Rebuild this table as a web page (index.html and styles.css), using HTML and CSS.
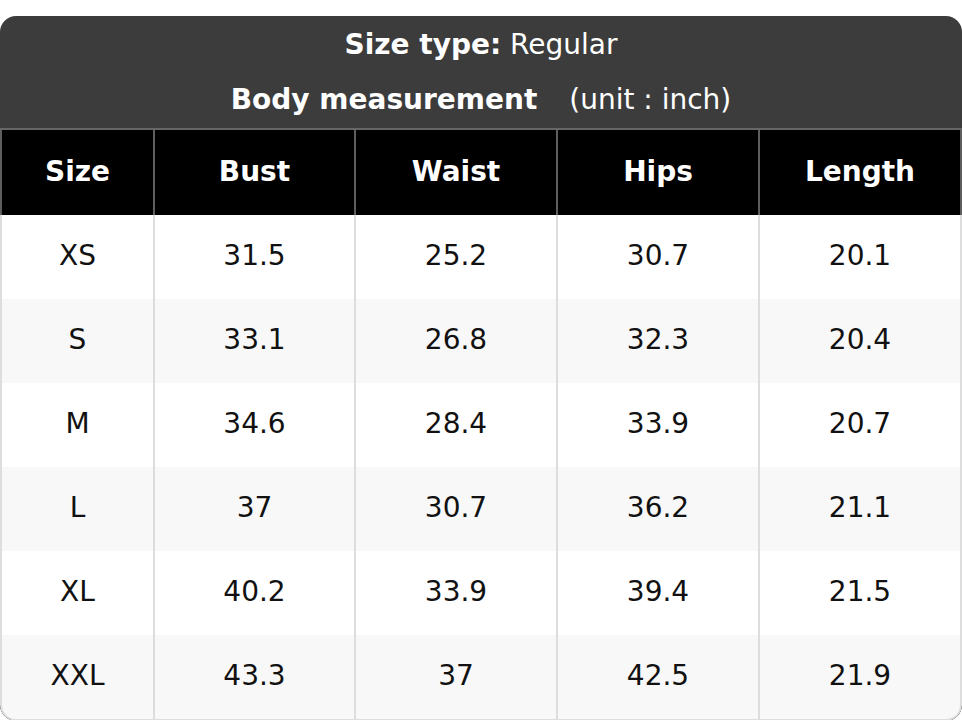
FILE: index.html
```html
<!DOCTYPE html>
<html lang="en">
<head>
<meta charset="utf-8">
<title>Size chart</title>
<link rel="stylesheet" href="styles.css">
</head>
<body>
<div class="card">
  <div class="title">
    <div class="title-line"><b>Size type:</b> Regular</div>
    <div class="title-line"><b>Body measurement</b><span class="unit">(unit : inch)</span></div>
  </div>
  <div class="head row">
    <div class="cell">Size</div>
    <div class="cell">Bust</div>
    <div class="cell">Waist</div>
    <div class="cell">Hips</div>
    <div class="cell">Length</div>
  </div>
  <div class="body">
    <div class="row data">
      <div class="cell">XS</div><div class="cell">31.5</div><div class="cell">25.2</div><div class="cell">30.7</div><div class="cell">20.1</div>
    </div>
    <div class="row data alt">
      <div class="cell">S</div><div class="cell">33.1</div><div class="cell">26.8</div><div class="cell">32.3</div><div class="cell">20.4</div>
    </div>
    <div class="row data">
      <div class="cell">M</div><div class="cell">34.6</div><div class="cell">28.4</div><div class="cell">33.9</div><div class="cell">20.7</div>
    </div>
    <div class="row data alt">
      <div class="cell">L</div><div class="cell">37</div><div class="cell">30.7</div><div class="cell">36.2</div><div class="cell">21.1</div>
    </div>
    <div class="row data">
      <div class="cell">XL</div><div class="cell">40.2</div><div class="cell">33.9</div><div class="cell">39.4</div><div class="cell">21.5</div>
    </div>
    <div class="row data alt">
      <div class="cell">XXL</div><div class="cell">43.3</div><div class="cell">37</div><div class="cell">42.5</div><div class="cell">21.9</div>
    </div>
  </div>
</div>
</body>
</html>
```

FILE: styles.css
```css
html, body {
  margin: 0;
  padding: 0;
  background: #ffffff;
}

body {
  padding-top: 16px;
  font-family: "DejaVu Sans", "Liberation Sans", sans-serif;
}

.card {
  width: 962px;
  border-radius: 16px;
  overflow: hidden;
  background: #3c3c3c;
}

.title {
  color: #ffffff;
  font-size: 28px;
  text-align: center;
  border-bottom: 2px solid #666666;
}

.title-line {
  height: 56px;
  line-height: 56px;
}

.title-line:first-child {
  padding-top: 1px;
  height: 55px;
}

.title-line b {
  font-weight: bold;
}

.unit {
  margin-left: 32px;
}

.row {
  display: grid;
  grid-template-columns: 151px 199px 200px 200px 200px;
  column-gap: 2px;
}

.head {
  background: #5e5e5e;
  padding: 0 2px;
  height: 85px;
}

.head .cell {
  background: #000000;
  color: #ffffff;
  font-weight: bold;
  font-size: 28px;
  padding-bottom: 2px;
}

.cell {
  display: flex;
  align-items: center;
  justify-content: center;
}

.body {
  background: #dddddd;
  border: 2px solid #dddddd;
  border-top: 0;
  border-radius: 0 0 16px 16px;
  overflow: hidden;
}

.data {
  height: 84px;
}

.data .cell {
  background: #ffffff;
  color: #111111;
  font-size: 28px;
  padding-bottom: 3px;
}

.data.alt .cell {
  background: #f8f8f8;
}
```
